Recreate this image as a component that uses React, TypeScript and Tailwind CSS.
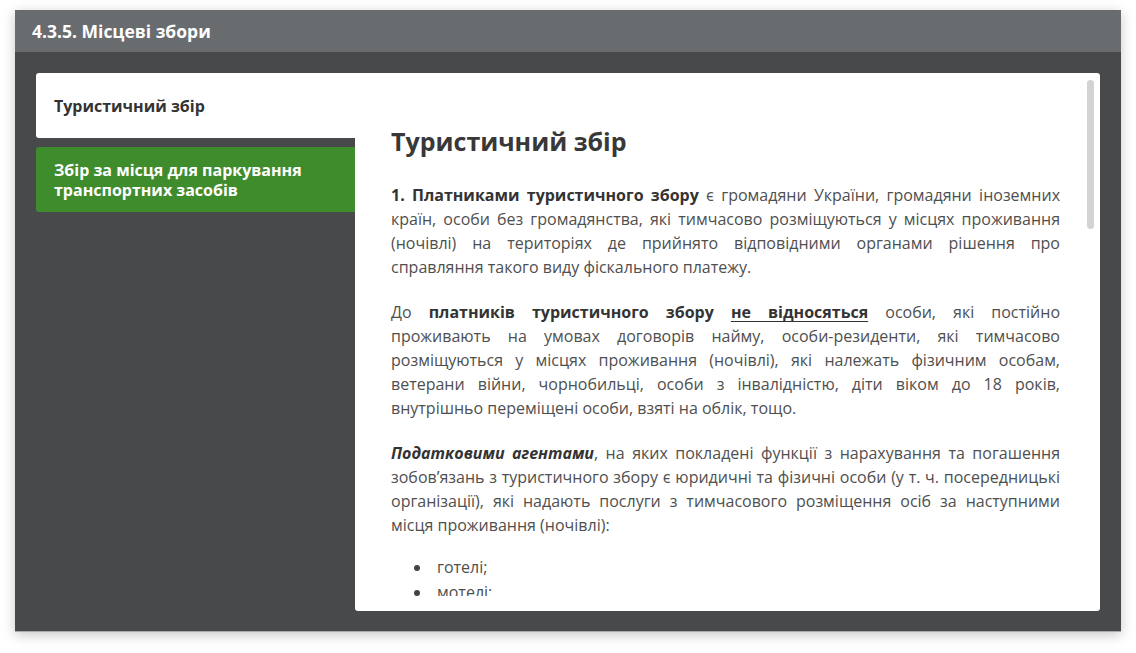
import React from "react";

const font = { fontFamily: '"Open Sans", "Noto Sans", sans-serif' };

const listItems = ["готелі;", "мотелі;", "гуртожитки;"];

const App = () => {
	const [activeTab, setActiveTab] = React.useState("tourist");

	return (
		<div className="w-[1136px] h-[653px] bg-white pt-[10px] pl-[15px]" style={font}>
			<div className="w-[1106px] h-[622px] flex flex-col bg-[#48494b] border-b border-[#a9a9a9] shadow-[0_3px_12px_rgba(0,0,0,0.22)]">
				{/* Header */}
				<div className="h-[42px] shrink-0 bg-[#696c6f] flex items-center px-[17px]">
					<h1 className="text-[17.5px] font-bold text-white">4.3.5. Місцеві збори</h1>
				</div>

				{/* Body */}
				<div className="flex-1 flex p-[21px] pb-[20px] min-h-0">
					{/* Tabs */}
					<div className="w-[319px] shrink-0 flex flex-col gap-[9px]">
						<button
							onClick={() => setActiveTab("tourist")}
							className="h-[65px] text-left px-[18px] rounded-l-[3px] bg-white text-[#333] text-[16px] font-bold"
						>
							Туристичний збір
						</button>
						<button
							onClick={() => setActiveTab("parking")}
							className="h-[65px] text-left px-[18px] rounded-[3px] rounded-r-none bg-[#3f8c2d] text-white text-[16px] font-bold leading-[20px]"
						>
							Збір за місця для паркування
							<br />
							транспортних засобів
						</button>
					</div>

					{/* Content */}
					<div className="relative flex-1 bg-white rounded-r-[3px] rounded-bl-[3px] pb-[15px]">
						<div className="absolute right-[6px] top-[7px] w-[7px] h-[149px] rounded-full bg-[#d3d3d3]" />
						<div className="h-full overflow-hidden pl-[36px] pr-[40px] pt-[50px] text-[16px] leading-[24px] text-[#4f4f4f] text-justify">
							{activeTab === "tourist" ? (
								<>
									<h2 className="text-[25px] leading-[36px] font-bold text-[#383838] mb-[24px] text-left">
										Туристичний збір
									</h2>
									<p className="mb-[21px]">
										<b className="text-[#333]">1. Платниками туристичного збору</b> є громадяни України, громадяни
										іноземних країн, особи без громадянства, які тимчасово розміщуються у місцях проживання
										(ночівлі) на територіях де прийнято відповідними органами рішення про справляння такого виду
										фіскального платежу.
									</p>
									<p className="mb-[21px]">
										До <b className="text-[#333]">платників туристичного збору</b>{" "}
										<b className="text-[#333] underline underline-offset-[3px]">не відносяться</b> особи, які
										постійно проживають на умовах договорів найму, особи-резиденти, які тимчасово розміщуються у
										місцях проживання (ночівлі), які належать фізичним особам, ветерани війни, чорнобильці, особи
										з інвалідністю, діти віком до 18 років, внутрішньо переміщені особи, взяті на облік, тощо.
									</p>
									<p className="mb-[18px]">
										<b className="text-[#333] italic">Податковими агентами</b>, на яких покладені функції з
										нарахування та погашення зобов’язань з туристичного збору є юридичні та фізичні особи (у т. ч.
										посередницькі організації), які надають послуги з тимчасового розміщення осіб за наступними
										місця проживання (ночівлі):
									</p>
									<ul className="pl-[23px] text-left leading-[25px]">
										{listItems.map(item => (
											<li key={item} className="flex items-center">
												<span className="w-[6px] h-[6px] rounded-full bg-[#444] mr-[17px] shrink-0" />
												{item}
											</li>
										))}
									</ul>
								</>
							) : (
								<h2 className="text-[25px] leading-[36px] font-bold text-[#383838]">
									Збір за місця для паркування транспортних засобів
								</h2>
							)}
						</div>
					</div>
				</div>
			</div>
		</div>
	);
};

export default App;
